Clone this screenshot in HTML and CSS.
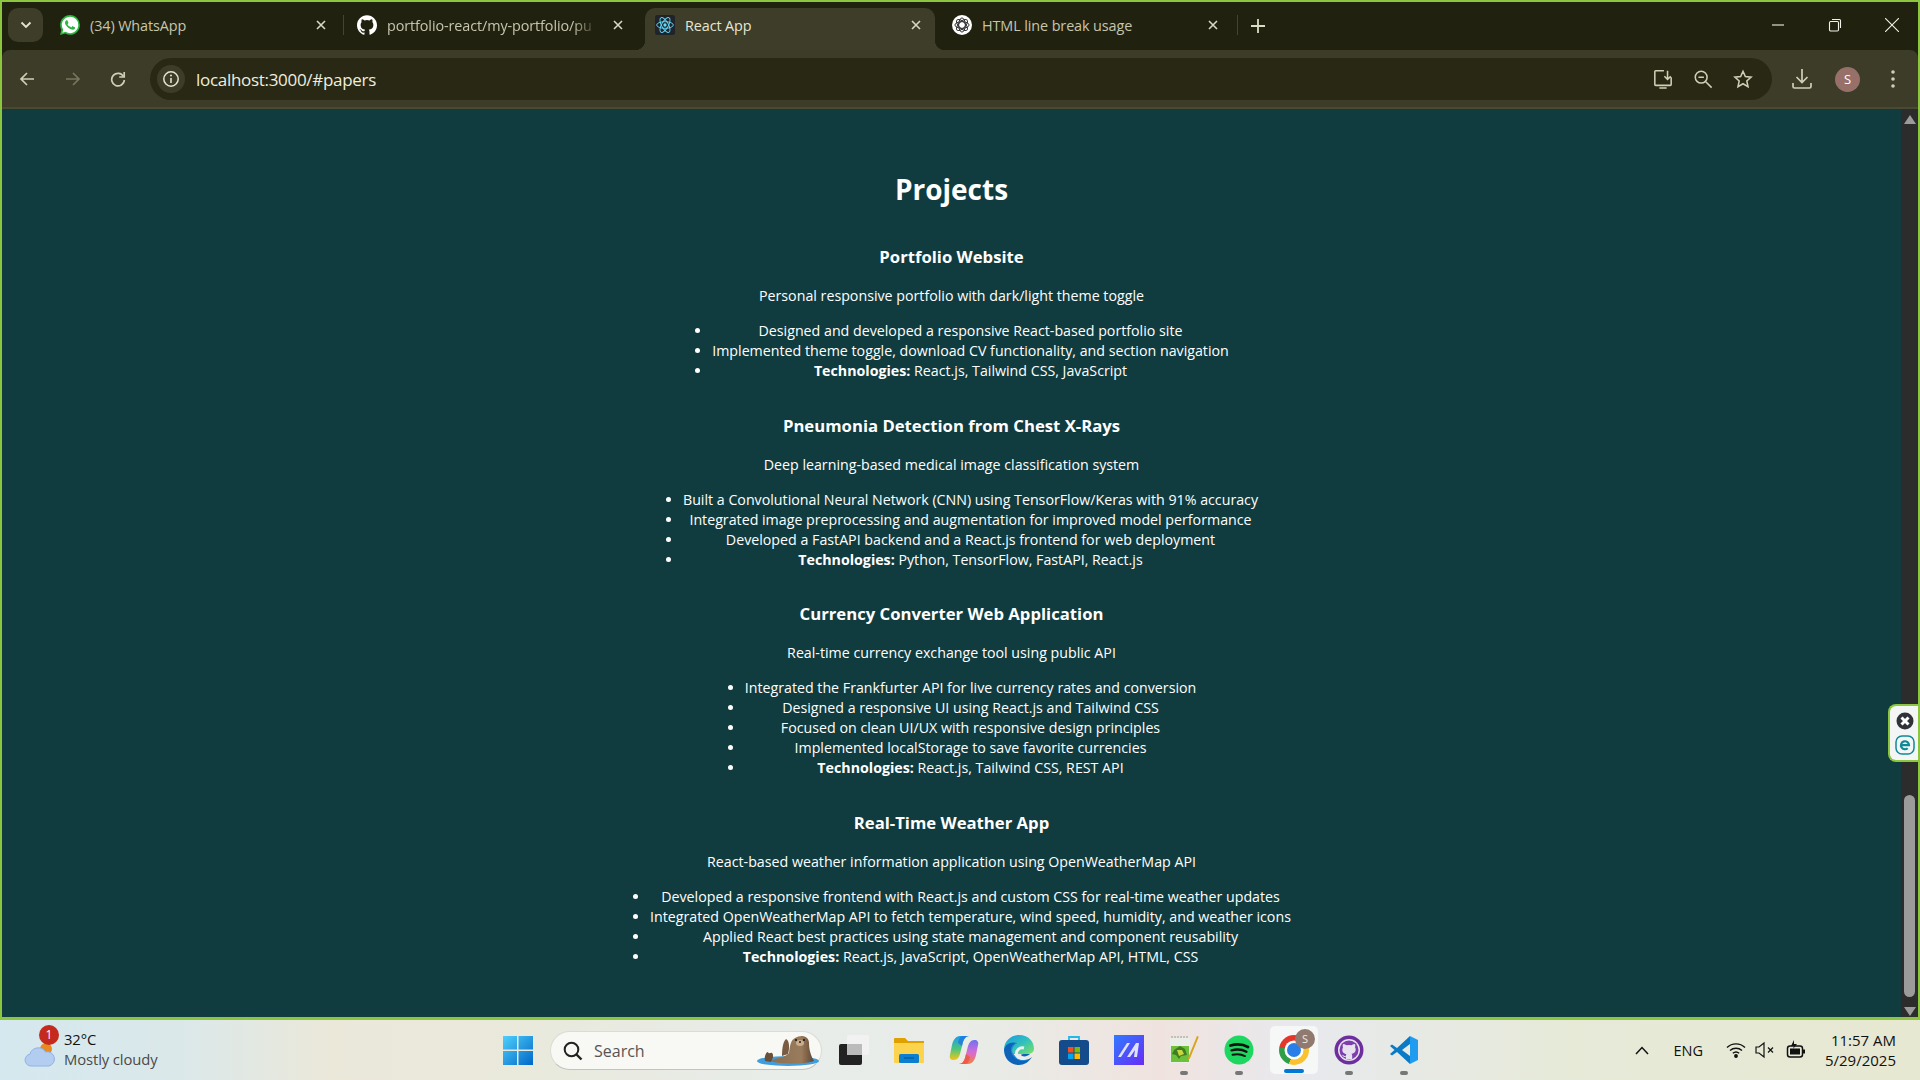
FILE: index.html
```html
<!DOCTYPE html>
<html lang="en">
<head>
<meta charset="utf-8">
<title>React App</title>
<link rel="stylesheet" href="styles.css">
</head>
<body>
<div class="window">
  <div class="tabstrip">
    <div class="tabsearch"><svg width="12" height="8" viewBox="0 0 12 8"><path d="M1.5 1.5 6 6l4.5-4.5" fill="none" stroke="#e4e4d0" stroke-width="1.8"/></svg></div>
    <div class="tab">
      <svg class="favicon" viewBox="0 0 24 24"><path d="M.06 24l1.69-6.16A11.9 11.9 0 0 1 .16 11.89C.16 5.34 5.5 0 12.05 0c3.18 0 6.17 1.24 8.41 3.49a11.82 11.82 0 0 1 3.48 8.41c0 6.56-5.34 11.89-11.89 11.89a11.9 11.9 0 0 1-5.69-1.45z" fill="#2bb741"/><path fill="#fff" d="M17.47 14.38c-.3-.15-1.76-.87-2.03-.97-.27-.1-.47-.15-.67.15-.2.3-.77.97-.94 1.16-.17.2-.35.22-.64.08-.3-.15-1.26-.46-2.39-1.48-.88-.79-1.48-1.76-1.65-2.06-.17-.3-.02-.46.13-.61.13-.13.3-.35.45-.52.15-.17.2-.3.3-.5.1-.2.05-.37-.03-.52-.07-.15-.67-1.61-.92-2.21-.24-.58-.49-.5-.67-.51h-.57c-.2 0-.52.07-.79.37-.27.3-1.04 1.02-1.04 2.48s1.07 2.88 1.21 3.07c.15.2 2.1 3.2 5.08 4.49.71.31 1.26.49 1.69.63.71.23 1.36.2 1.87.12.57-.09 1.76-.72 2.01-1.41.25-.7.25-1.29.17-1.41-.07-.13-.27-.2-.57-.35m-5.42 7.4a9.87 9.87 0 0 1-5.03-1.38l-.36-.21-3.74.98 1-3.65-.24-.37a9.86 9.86 0 0 1-1.51-5.26c0-5.45 4.44-9.88 9.89-9.88 2.64 0 5.12 1.03 6.99 2.9a9.83 9.83 0 0 1 2.89 6.99c0 5.45-4.44 9.88-9.89 9.88"/></svg>
      <span class="tabtitle">(34) WhatsApp</span>
      <svg class="tabclose" viewBox="0 0 10 10"><path d="M1 1l8 8M9 1l-8 8"/></svg>
    </div>
    <div class="sep"></div>
    <div class="tab">
      <svg class="favicon" viewBox="0 0 24 24"><path fill="#fff" d="M12 .3c-6.63 0-12 5.37-12 12 0 5.3 3.44 9.8 8.2 11.38.6.12.82-.26.82-.57 0-.29-.01-1.04-.01-2.04-3.34.72-4.04-1.61-4.04-1.61-.55-1.39-1.34-1.76-1.34-1.76-1.09-.74.08-.73.08-.73 1.2.08 1.84 1.24 1.84 1.24 1.07 1.83 2.81 1.3 3.5 1 .1-.78.41-1.31.76-1.61-2.67-.3-5.47-1.33-5.47-5.93 0-1.31.47-2.38 1.24-3.22-.14-.3-.54-1.52.1-3.18 0 0 1.01-.32 3.3 1.23a11.5 11.5 0 0 1 6 0c2.28-1.55 3.29-1.23 3.29-1.23.64 1.65.24 2.87.12 3.18.77.84 1.23 1.91 1.23 3.22 0 4.61-2.81 5.63-5.48 5.92.42.36.81 1.1.81 2.22v3.29c0 .32.21.69.83.57C20.57 22.09 24 17.59 24 12.3c0-6.63-5.37-12-12-12"/></svg>
      <span class="tabtitle fade">portfolio-react/my-portfolio/pu</span>
      <svg class="tabclose" viewBox="0 0 10 10"><path d="M1 1l8 8M9 1l-8 8"/></svg>
    </div>
    <div class="sep off"></div>
    <div class="tab active">
      <svg class="favicon" viewBox="0 0 24 24"><rect width="24" height="24" rx="3" fill="#20232a"/><g fill="none" stroke="#61dafb" stroke-width="1.1"><ellipse cx="12" cy="12" rx="10" ry="4"/><ellipse cx="12" cy="12" rx="10" ry="4" transform="rotate(60 12 12)"/><ellipse cx="12" cy="12" rx="10" ry="4" transform="rotate(120 12 12)"/></g><circle cx="12" cy="12" r="2" fill="#61dafb"/></svg>
      <span class="tabtitle">React App</span>
      <svg class="tabclose" viewBox="0 0 10 10"><path d="M1 1l8 8M9 1l-8 8"/></svg>
    </div>
    <div class="sep off"></div>
    <div class="tab">
      <svg class="favicon" viewBox="0 0 24 24"><circle cx="12" cy="12" r="12" fill="#fff"/><g fill="none" stroke="#333" stroke-width="1.2"><ellipse cx="12" cy="12" rx="8.500" ry="4"/><ellipse cx="12" cy="12" rx="8.500" ry="4" transform="rotate(45 12 12)"/><ellipse cx="12" cy="12" rx="8.500" ry="4" transform="rotate(90 12 12)"/><ellipse cx="12" cy="12" rx="8.500" ry="4" transform="rotate(135 12 12)"/></g></svg>
      <span class="tabtitle">HTML line break usage</span>
      <svg class="tabclose" viewBox="0 0 10 10"><path d="M1 1l8 8M9 1l-8 8"/></svg>
    </div>
    <div class="sep last"></div>
    <svg class="newtab" viewBox="0 0 14 14"><path d="M7 0v14M0 7h14"/></svg>
    <div class="winctrls">
      <svg class="winbtn" viewBox="0 0 14 14"><path d="M1 7h12"/></svg>
      <svg class="winbtn" viewBox="0 0 14 14"><rect x="1.5" y="3.5" width="9" height="9.5" rx="1.2"/><path d="M4 1.5h7.5a1 1 0 0 1 1 1V10"/></svg>
      <svg class="winbtn" viewBox="0 0 14 14"><path d="M0 0l14 14M14 0L0 14"/></svg>
    </div>
  </div>

  <div class="toolbar">
    <svg class="navicon" viewBox="0 0 16 16"><path d="M15 8H2M8 2 2 8l6 6"/></svg>
    <svg class="navicon dim" viewBox="0 0 16 16"><path d="M1 8h13M8 2l6 6-6 6"/></svg>
    <svg class="navicon" viewBox="0 0 16 16"><path d="M13.5 5.5A6.3 6.3 0 1 0 14.3 9"/><path d="M14.2 1v5h-5" /></svg>
    <div class="omnibox">
      <div class="infochip"><svg width="18" height="18" viewBox="0 0 18 18"><circle cx="9" cy="9" r="7.2" fill="none" stroke="#e4e4d0" stroke-width="1.5"/><path d="M9 8v5" stroke="#e4e4d0" stroke-width="1.6"/><circle cx="9" cy="5.5" r="1" fill="#e4e4d0"/></svg></div>
      <span class="url">localhost:3000/#papers</span>
      <div class="omniicons">
        <svg class="toolicon" viewBox="0 0 22 22"><path d="M20 9v8a1 1 0 0 1-1 1H3a1 1 0 0 1-1-1V3a1 1 0 0 1 1-1h9M7 21h8M16 2v9M12.500 8l3.500 3.500L19.500 8"/></svg>
        <svg class="toolicon" viewBox="0 0 22 22"><circle cx="9" cy="9" r="6.500"/><path d="M6 9h6M14 14l6.500 6.500"/></svg>
        <svg class="toolicon" viewBox="0 0 22 22"><path d="M11 2.500l2.600 5.800 6.300.7-4.700 4.200 1.300 6.200L11 16.200l-5.500 3.200 1.300-6.200L2.100 9l6.300-.7z"/></svg>
      </div>
    </div>
    <svg class="toolicon dl" viewBox="0 0 22 22"><path d="M11 1v13M5.500 9l5.500 5.500L16.500 9M2 15v3.500a1.500 1.500 0 0 0 1.500 1.500h15a1.500 1.500 0 0 0 1.500-1.500V15"/></svg>
    <div class="avatar">S</div>
    <svg class="kebab" viewBox="0 0 4 20"><circle cx="2" cy="3" r="1.800"/><circle cx="2" cy="10" r="1.800"/><circle cx="2" cy="17" r="1.800"/></svg>
  </div>

  <div class="viewport">
    <main class="page">
      <h2 class="title">Projects</h2>

      <section class="project">
        <h3>Portfolio Website</h3>
        <p>Personal responsive portfolio with dark/light theme toggle</p>
        <ul>
          <li>Designed and developed a responsive React-based portfolio site</li>
          <li>Implemented theme toggle, download CV functionality, and section navigation</li>
          <li><strong>Technologies:</strong> React.js, Tailwind CSS, JavaScript</li>
        </ul>
      </section>

      <section class="project">
        <h3>Pneumonia Detection from Chest X-Rays</h3>
        <p>Deep learning-based medical image classification system</p>
        <ul>
          <li>Built a Convolutional Neural Network (CNN) using TensorFlow/Keras with 91% accuracy</li>
          <li>Integrated image preprocessing and augmentation for improved model performance</li>
          <li>Developed a FastAPI backend and a React.js frontend for web deployment</li>
          <li><strong>Technologies:</strong> Python, TensorFlow, FastAPI, React.js</li>
        </ul>
      </section>

      <section class="project">
        <h3>Currency Converter Web Application</h3>
        <p>Real-time currency exchange tool using public API</p>
        <ul>
          <li>Integrated the Frankfurter API for live currency rates and conversion</li>
          <li>Designed a responsive UI using React.js and Tailwind CSS</li>
          <li>Focused on clean UI/UX with responsive design principles</li>
          <li>Implemented localStorage to save favorite currencies</li>
          <li><strong>Technologies:</strong> React.js, Tailwind CSS, REST API</li>
        </ul>
      </section>

      <section class="project">
        <h3>Real-Time Weather App</h3>
        <p>React-based weather information application using OpenWeatherMap API</p>
        <ul>
          <li>Developed a responsive frontend with React.js and custom CSS for real-time weather updates</li>
          <li>Integrated OpenWeatherMap API to fetch temperature, wind speed, humidity, and weather icons</li>
          <li>Applied React best practices using state management and component reusability</li>
          <li><strong>Technologies:</strong> React.js, JavaScript, OpenWeatherMap API, HTML, CSS</li>
        </ul>
      </section>
    </main>
    <div class="scrollbar">
      <div class="arrow up"></div>
      <div class="track"><div class="thumb"></div></div>
      <div class="arrow down"></div>
    </div>
    <div class="eset">
      <svg width="18" height="18" viewBox="0 0 18 18"><circle cx="9" cy="9" r="8.500" fill="#2f3338"/><path d="M5.500 5.500l7 7M12.500 5.500l-7 7" stroke="#fff" stroke-width="3"/></svg>
      <svg width="20" height="20" viewBox="0 0 20 20"><rect x="1" y="1" width="18" height="18" rx="6" fill="none" stroke="#0e8a96" stroke-width="1.500"/><path d="M6 10.200h8a4 4 0 1 0-1.300 3" fill="none" stroke="#0e8a96" stroke-width="2.200"/></svg>
    </div>
  </div>
</div>

<footer class="taskbar">
  <div class="weather">
    <div class="wicon">
      <svg width="32" height="24" viewBox="0 0 32 24"><circle cx="22" cy="6" r="6" fill="#e98a1f"/><path d="M7 23a6 6 0 0 1-1-11.900A8.500 8.500 0 0 1 21.500 9 7 7 0 0 1 25 23z" fill="#b3cdf1" stroke="#8fb2e4"/></svg>
      <span class="wbadge">1</span>
    </div>
    <div class="wtext"><span class="temp">32°C</span><span class="cond">Mostly cloudy</span></div>
  </div>
  <div class="center">
    <svg class="ticon" viewBox="0 0 30 30"><defs><linearGradient id="w" x1="0" y1="0" x2="1" y2="1"><stop offset="0" stop-color="#4fd0fb"/><stop offset="1" stop-color="#0067c8"/></linearGradient></defs><path fill="url(#w)" d="M0 1h14v13.500H0zM15.500 1H30v13.500H15.500zM0 16h14v14H0zM15.500 16H30v14H15.500z"/></svg>
    <div class="searchbox">
      <svg width="22" height="22" viewBox="0 0 22 22"><circle cx="9.500" cy="9.500" r="6.800" fill="none" stroke="#222" stroke-width="2"/><path d="M14.500 14.500l5 5" stroke="#222" stroke-width="2.400"/></svg>
      <span>Search</span>
      <svg class="otter" width="64" height="38" viewBox="0 0 64 38"><defs><linearGradient id="ot" x1="0" y1="0" x2="1" y2="0"><stop offset="0" stop-color="#8b6f52"/><stop offset=".7" stop-color="#9a7c5c"/><stop offset="1" stop-color="#5d4632"/></linearGradient></defs><ellipse cx="31" cy="30" rx="31" ry="5" fill="#3f9fdc"/><path d="M14 30C20 26 28 27 32 22 33 14 34 9 38 7 44 3 52 5 52 12 52 17 53 23 57 30 50 33 24 34 14 30z" fill="url(#ot)"/><path d="M25 25C25 17 26 11 29 8 32 9 33 16 31 23z" fill="#7a5c42"/><path d="M8 30C7 26 9 21 11 21 12 24 14 21 15 22 17 24 16 28 14 31z" fill="#6b4f38"/><ellipse cx="43" cy="12" rx="4" ry="3" fill="#c9ad8d"/><circle cx="39" cy="9" r="1" fill="#111"/><circle cx="47" cy="9" r="1" fill="#111"/><circle cx="43" cy="11" r="1" fill="#222"/></svg>
    </div>
    <svg class="ticon" viewBox="0 0 30 30"><rect y="9" width="23" height="21" rx="2" fill="#222"/><rect x="8" width="22" height="20" rx="2" fill="#f2f2f2" fill-opacity=".9"/><rect x="8" y="9" width="15" height="11" fill="#bbb"/></svg>
    <svg class="ticon" viewBox="0 0 30 30"><path d="M0 4a1 1 0 0 1 1-1h10l3 3h16v6H0z" fill="#e0a100"/><path d="M0 8h30v19a1 1 0 0 1-1 1H1a1 1 0 0 1-1-1z" fill="#fcd34c"/><rect x="5" y="19" width="20" height="9" rx="1.500" fill="#0c7fd0"/><path d="M10 23h10" stroke="#06508a"/></svg>
    <svg class="ticon" viewBox="0 0 30 30"><defs><linearGradient id="c1" x1="0" y1="0" x2="0" y2="1"><stop offset="0" stop-color="#1a9cf0"/><stop offset=".55" stop-color="#4fc678"/><stop offset="1" stop-color="#f5c518"/></linearGradient><linearGradient id="c2" x1="0" y1="0" x2="0" y2="1"><stop offset="0" stop-color="#6f72f0"/><stop offset=".5" stop-color="#d46bd8"/><stop offset="1" stop-color="#f5803c"/></linearGradient></defs><path d="M11 1h9c-3 0-5 3-6 6l-3 12c-1 3-3 6-6 6H4c-2 0-4-2-3-5l2-10C4 5 7 1 11 1z" fill="url(#c1)"/><path d="M19 29h-9c3 0 5-3 6-6l3-12c1-3 3-6 6-6h1c2 0 4 2 3 5l-2 10c-1 5-4 9-8 9z" fill="url(#c2)"/><path d="M14 1h6c-3 0-5 3-6 6l-1 4-4-3c1-4 2-7 5-7z" fill="#1f6fe0" fill-opacity=".7"/><path d="M16 29h-6c3 0 5-3 6-6l1-4 4 3c-1 4-2 7-5 7z" fill="#f0503c" fill-opacity=".75"/></svg>
    <svg class="ticon" viewBox="0 0 30 30"><defs><linearGradient id="e1" x1="0" y1="0" x2="1" y2="1"><stop offset="0" stop-color="#1a9ae0"/><stop offset=".5" stop-color="#30bfc0"/><stop offset="1" stop-color="#7ce35e"/></linearGradient></defs><path d="M15 0C25 0 30 7 30 14c0 3-3 5-7 5H9C7 8 0 18 0 15 0 6 7 0 15 0z" fill="url(#e1)"/><path d="M0 15C1 9 7 6 13 8c-4 1-6 5-5 9 1 6 7 9 12 8 3 0 6-1 8-3-3 5-8 8-13 8C6 30 0 23 0 15z" fill="#0c63b8"/><path d="M8 15c1-4 3-6 5-7-3 0-5 2-6 5-1 6 4 12 11 13 2 0 4 0 6-1-7 1-15-3-16-10z" fill="#1e86d8"/><path d="M20 13c-5-1-8 3-7.500 6.500C13 23 17 24 21 23" fill="none" stroke="#e8f0f0" stroke-width="3"/><path d="M21 19c-2 0-4 0-4 1 1 2 6 2 9-1z" fill="#0c63b8"/></svg>
    <svg class="ticon" viewBox="0 0 30 30"><path d="M10 6V2h10v4" fill="none" stroke="#22b8e8" stroke-width="1.800"/><rect y="5" width="30" height="25" rx="3" fill="#144b8a"/><rect x="9" y="12" width="5.500" height="5.500" fill="#f25022"/><rect x="15.500" y="12" width="5.500" height="5.500" fill="#7fba00"/><rect x="9" y="18.500" width="5.500" height="5.500" fill="#00a4ef"/><rect x="15.500" y="18.500" width="5.500" height="5.500" fill="#ffb900"/></svg>
    <svg class="ticon" viewBox="0 0 30 30"><defs><linearGradient id="m1" x1="0" y1="0" x2="1" y2="1"><stop offset="0" stop-color="#2f7bff"/><stop offset="1" stop-color="#6a2cf5"/></linearGradient></defs><rect width="30" height="30" fill="url(#m1)"/><path d="M4 22L13 8h3L7 22zM13 22l9-14h3l-2 14h-3l1-7-5 7z" fill="#dfe3ff"/></svg>
    <div class="pinned">
      <svg class="ticon" viewBox="0 0 30 30"><rect x="1" y="3" width="20" height="25" fill="#eaeee6"/><path d="M3 3v-2M6 3v-2M9 3v-2M12 3v-2M15 3v-2M18 3v-2" stroke="#9a9a90" stroke-width="1"/><rect x="2" y="11" width="18" height="16" fill="#6cc03a"/><path d="M5 15l6-4 5 3 2 6-6 1-2 3-3-4-4-1z" fill="#3d7d24"/><path d="M8 15l5 0 2 4-5 2z" fill="#c9d63d"/><path d="M19 23L28 1l1.800.8-9 22-2 1.500z" fill="#d8a31e"/></svg>
      <i class="rundot"></i>
    </div>
    <div class="pinned">
      <svg class="ticon" viewBox="0 0 30 30"><circle cx="15" cy="15" r="14.500" fill="#1ed760"/><g fill="none" stroke="#111" stroke-linecap="round"><path d="M6.500 10.500c6-1.700 12.500-1.300 17.500 1.500" stroke-width="2.800"/><path d="M7.500 15.300c5-1.300 10.800-.9 15 1.500" stroke-width="2.300"/><path d="M8.500 19.800c4.300-1 8.800-.7 12.500 1.300" stroke-width="1.900"/></g></svg>
      <i class="rundot"></i>
    </div>
    <div class="chrometile">
      <div class="chrome"><span class="chromeinner"></span></div>
      <span class="chromeav">S</span>
      <i class="activebar"></i>
    </div>
    <div class="pinned">
      <svg class="ticon" viewBox="0 0 30 30"><circle cx="15" cy="15" r="14.500" fill="#6e2f9e"/><circle cx="15" cy="15" r="11" fill="#e8e2ee"/><circle cx="15" cy="15" r="9.500" fill="#7c3fae"/><path d="M9 9c2 0 3 1 3.500 1.300a8 8 0 0 1 5 0C18 10 19 9 21 9c.4 1 .4 2.500 0 3.200.5.800.7 1.500.7 2.300 0 3-2.200 4-4.200 4.300.5.500.7 1.200.7 2V24h-6.400v-2.200c-2.500.500-3.200-1-3.800-2 1 .2 1.800 1 2.500 1.200l1.300-.1c0-.7.200-1.300.7-1.800-2-.3-4.200-1.300-4.200-4.300 0-.8.200-1.500.7-2.300C8.600 11.500 8.600 10 9 9z" fill="#e8e2ee"/></svg>
      <i class="rundot"></i>
    </div>
    <div class="pinned">
      <svg class="ticon" viewBox="0 0 30 30"><path d="M21 1l8 4v20l-8 4z" fill="#1f9cf0"/><path d="M21 1L8 13 3 9.500 1 11l4.500 4L1 19l2 1.500L8 17l13 12v-8l-8-6 8-6z" fill="#0a7ac6"/></svg>
      <i class="rundot"></i>
    </div>
  </div>
  <div class="tray">
    <svg class="caret" width="14" height="9" viewBox="0 0 14 9"><path d="M1 8l6-6.500L13 8" fill="none" stroke="#111" stroke-width="1.500"/></svg>
    <span class="lang">ENG</span>
    <svg width="20" height="18" viewBox="0 0 20 18" fill="none" stroke="#111" stroke-width="1.400"><path d="M1 6.500a13 13 0 0 1 18 0M4 9.500a9 9 0 0 1 12 0M6.800 12.300a5 5 0 0 1 6.400 0"/><circle cx="10" cy="15" r="1.200" fill="#111"/></svg>
    <svg width="20" height="18" viewBox="0 0 20 18" fill="none" stroke="#111" stroke-width="1.200"><path d="M1 6h3l5-4v14l-5-4H1zM13 6.500l5 5M18 6.500l-5 5"/></svg>
    <svg class="batt" width="20" height="20" viewBox="0 0 20 20"><rect x="1.500" y="6" width="15" height="11" rx="2.500" fill="none" stroke="#111" stroke-width="1.500"/><rect x="4" y="8.500" width="10" height="6" fill="#111"/><rect x="17" y="9.500" width="2" height="4" fill="#111"/><path d="M8 0L5 6h3l-1 3 4-5H8z" fill="#111"/></svg>
    <div class="clock"><span>11:57 AM</span><span>5/29/2025</span></div>
  </div>
</footer>
</body>
</html>
```
FILE: styles.css
```css
* { box-sizing: border-box; }
html, body { margin: 0; padding: 0; height: 1080px; overflow: hidden; }
body { font-family: "Open Sans", "Liberation Sans", sans-serif; background: #e8e8dc; display: flex; flex-direction: column; }

.window { height: 1020px; display: flex; flex-direction: column; border: solid #8cc63e; border-width: 2px 2px 3px; background: #212110; }

/* tab strip */
.tabstrip { height: 48px; display: flex; align-items: flex-start; padding: 6px 0 0 6px; flex: none; }
.tabsearch { width: 35px; height: 34px; border-radius: 10px; background: #3d3d29; display: flex; align-items: center; justify-content: center; margin-right: 7px; flex: none; }
.tab { position: relative; width: 290px; height: 42px; flex: none; display: flex; align-items: center; padding: 0 14px 8px 10px; color: #c6c6ae; font-size: 14.400px; letter-spacing: -.1px; }
.tab.active { background: #3d3d29; border-radius: 10px 10px 0 0; color: #e6e6d4; margin-left: 1px; }
.tab.active::before, .tab.active::after { content: ""; position: absolute; bottom: 0; width: 10px; height: 10px; }
.tab.active::before { left: -10px; background: radial-gradient(circle at 0 0, transparent 10px, #3d3d29 10.500px); }
.tab.active::after { right: -10px; background: radial-gradient(circle at 100% 0, transparent 10px, #3d3d29 10.500px); }
.favicon { width: 20px; height: 20px; flex: none; margin-right: 10px; }
.tabtitle { flex: 1; white-space: nowrap; overflow: hidden; }
.tabtitle.fade { -webkit-mask-image: linear-gradient(90deg, #000 88%, transparent); mask-image: linear-gradient(90deg, #000 88%, transparent); }
.tabclose { width: 10px; height: 10px; flex: none; margin-left: 15px; fill: none; stroke: #d8d8c4; stroke-width: 1.600; }
.sep { width: 7px; flex: none; height: 42px; display: flex; justify-content: center; }
.sep::before { content: ""; width: 1.500px; height: 20px; margin: 7px 0 0; background: #45452f; }
.sep.off::before { display: none; }
.sep.last { width: 11px; }
.newtab { width: 14px; height: 14px; margin: 11px 0 0 8px; fill: none; stroke: #dcdcc6; stroke-width: 1.800; flex: none; }
.winctrls { margin-left: auto; display: flex; gap: 43px; padding: 10px 19px 0 0; }
.winbtn { width: 14px; height: 14px; fill: none; stroke: #f2f2e6; stroke-width: 1.100; flex: none; }

/* toolbar */
.toolbar { height: 59px; flex: none; display: flex; align-items: center; padding: 1px 18px 0 17px; background: #3c3c28; border-radius: 8px 8px 0 0; border-bottom: 2px solid #4a4a32; }
.navicon { width: 16px; height: 16px; flex: none; margin-right: 30px; fill: none; stroke: #cfcfb6; stroke-width: 1.700; }
.navicon.dim { stroke: #77775f; }
.navicon:nth-child(3) { margin-left: -1px; }
.omnibox { width: 1622px; height: 42px; margin-left: -6px; border-radius: 21px; background: #282814; display: flex; align-items: center; padding: 0 16px 0 7px; flex: none; }
.infochip { width: 28px; height: 28px; border-radius: 50%; background: #3c3c28; display: flex; align-items: center; justify-content: center; flex: none; margin-right: 11px; }
.url { font-size: 17px; color: #eeeede; letter-spacing: -.3px; }
.omniicons { margin-left: auto; display: flex; gap: 20px; padding-right: 3px; }
.toolicon { width: 20px; height: 20px; fill: none; stroke: #cfcfb6; stroke-width: 1.700; flex: none; }
.toolicon.dl { width: 22px; height: 22px; margin-left: 19px; }
.avatar { width: 25px; height: 25px; border-radius: 50%; background: #97706a; color: #fff; font-size: 13px; display: flex; align-items: center; justify-content: center; margin-left: 22px; flex: none; }
.kebab { width: 4px; height: 20px; fill: #cfcfb6; margin-left: 31px; flex: none; }

/* page */
.viewport { position: relative; flex: 1; min-height: 0; display: flex; background: #113c3f; overflow: hidden; }
.page { flex: 1; min-width: 0; padding-top: 61px; color: #fff; text-align: center; font-size: 14.230px; line-height: 20px; }
.title { margin: 0 0 37px; font-size: 28px; line-height: 38px; font-weight: 700; }
.project { margin-bottom: 32.500px; }
.project h3 { margin: 0 0 17px; font-size: 16.700px; line-height: 24px; font-weight: 700; }
.project p { margin: 0 0 15px; }
.project ul { width: fit-content; margin: 0 auto; padding: 0 0 0 38px; }
.project li { line-height: 20px; }

.scrollbar { width: 17px; flex: none; background: #2c2c2c; display: flex; flex-direction: column; align-items: center; }
.track { flex: 1; width: 100%; padding-top: 671px; display: flex; justify-content: center; }
.thumb { width: 11px; height: 202px; border-radius: 6px; background: #9b9b9b; }
.arrow { width: 0; height: 0; border-left: 6px solid transparent; border-right: 6px solid transparent; flex: none; }
.arrow.up { border-bottom: 9px solid #9b9b9b; margin: 6px 0 0; }
.arrow.down { border-top: 9px solid #9b9b9b; margin: 0 0 1px; }

.eset { position: absolute; right: 0; top: 595px; width: 30px; height: 58px; background: #f4f5f5; border: 2px solid #8cc63e; border-right: none; border-radius: 8px 0 0 8px; display: flex; flex-direction: column; align-items: center; justify-content: center; gap: 5px; padding-left: 1px; }

/* taskbar */
.taskbar { height: 60px; flex: none; display: flex; align-items: center; position: relative; background: linear-gradient(90deg, #d5e8ef 0, #dbe8ea 180px, #ebe8da 330px, #e9e9dc 520px, #e8edea 800px, #e9ebe6 1000px, #f0e3df 1160px, #e8e9ee 1300px, #e6ead8 1560px, #e6e8d2 1920px); }
.weather { width: 503px; flex: none; display: flex; align-items: center; padding-left: 24px; }
.wicon { position: relative; width: 32px; height: 24px; margin-top: 10px; }
.wbadge { position: absolute; left: 15px; top: -18px; width: 20px; height: 20px; border-radius: 50%; background: #c42b1c; color: #fff; font-size: 12px; line-height: 20px; text-align: center; }
.wtext { display: flex; flex-direction: column; margin-left: 8px; font-size: 14.800px; line-height: 20px; color: #111; margin-top: -2px; letter-spacing: -.1px; }
.cond { color: #4a4a4a; }
.center { display: flex; align-items: center; flex: none; gap: 25px; }
.ticon { width: 30px; height: 30px; flex: none; display: block; }
.searchbox { position: relative; width: 272px; height: 39px; margin: 0 -8px 0 -8px; border-radius: 20px; background: #f8f8f4; border: 1px solid #dcdcd4; border-bottom-color: #c4c4bc; display: flex; align-items: center; padding: 2px 0 0 11px; gap: 10px; color: #555; font-size: 16px; }
.otter { position: absolute; right: 0; bottom: 0; }
.pinned { position: relative; width: 30px; height: 30px; flex: none; }
.rundot { position: absolute; left: 11px; top: 36px; width: 8px; height: 4px; border-radius: 2px; background: #777; }
.chrometile { position: relative; width: 48px; height: 48px; margin: 0 -9px; flex: none; background: #f6f7f7; border-radius: 5px; display: flex; align-items: center; justify-content: center; }
.chrome { width: 30px; height: 30px; border-radius: 50%; background: conic-gradient(from -80deg, #e4372c 0 160deg, #f9c22e 160deg 280deg, #2f9e48 280deg 360deg); display: flex; align-items: center; justify-content: center; }
.chromeinner { width: 14px; height: 14px; border-radius: 50%; background: #2a7ee8; box-shadow: 0 0 0 2.500px #fff; }
.chromeav { position: absolute; left: 25px; top: 3px; width: 20px; height: 20px; border-radius: 50%; background: #907a70; color: #efe8e2; font-size: 11px; line-height: 20px; text-align: center; }
.activebar { position: absolute; left: 14px; bottom: 1px; width: 20px; height: 4px; border-radius: 2px; background: #0078d4; }
.tray { margin-left: auto; display: flex; align-items: center; gap: 9px; padding-right: 24px; color: #111; }
.caret { margin-right: 15px; }
.lang { font-size: 14.500px; margin-right: 14px; }
.batt { margin-left: 2px; }
.clock { display: flex; flex-direction: column; align-items: flex-end; font-size: 15px; line-height: 20px; margin-left: 10px; }
```
